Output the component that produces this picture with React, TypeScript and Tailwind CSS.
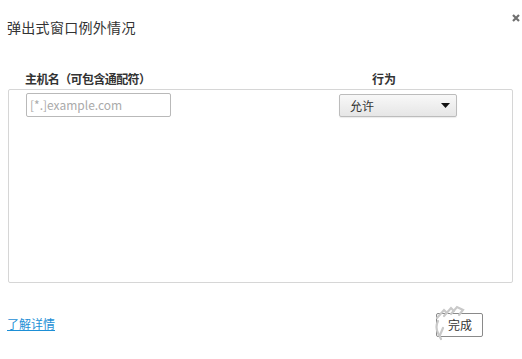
import React from "react";

export default function App() {
  return (
    <div
      className="relative w-[522px] h-[359px] bg-white overflow-hidden text-[#333]"
      style={{ fontFamily: '"Noto Sans CJK SC", "Liberation Sans", sans-serif' }}
    >
      <div className="flex justify-between items-start pl-[7px] pr-[2px] pt-[14px]">
        <div className="mt-[3px] text-[14px] leading-[20px] text-[#333] tracking-[0.3px]">弹出式窗口例外情况</div>
        <svg width="8" height="8" viewBox="0 0 8 8">
          <path d="M1 1 L7 7 M7 1 L1 7" stroke="#707070" strokeWidth="2.2" />
        </svg>
      </div>

      <div className="flex mt-[34px] text-[12px] leading-[16px] font-bold text-[#333]">
        <div className="ml-[25px] w-[347px] tracking-[-0.6px]">主机名（可包含通配符）</div>
        <div>行为</div>
      </div>

      <div className="ml-[8px] mt-[2px] w-[505px] h-[194px] border border-[#d6d6d6] rounded-[2px] flex items-start pl-[17px] pt-[3px]">
        <div className="w-[145px] h-[24px] border border-[#b9b9b9] rounded-[2px] flex items-center pl-[3px] text-[12px] text-[#aaa]">
          [*.]example.com
        </div>
        <div className="ml-[168px] mt-[1px] w-[118px] h-[23px] border border-[#bcbcbc] rounded-[2px] bg-gradient-to-b from-[#f8f8f8] to-[#e6e6e6] flex items-center justify-between pl-[10px] pr-[6px] text-[12px] text-[#333] shadow-[0_1px_1px_rgba(0,0,0,0.08)]">
          <span>允许</span>
          <svg width="9" height="5" viewBox="0 0 9 5">
            <path d="M0 0 L9 0 L4.5 5 Z" fill="#111" />
          </svg>
        </div>
      </div>

      <div className="flex justify-between items-center mt-[30px] pl-[7px] pr-[39px]">
        <a className="text-[12px] leading-[16px] text-[#1d8fd6] underline mt-[-2px]">了解详情</a>
        <div className="relative w-[47px] h-[24px] border border-[#8a8a8a] rounded-[2px] bg-white flex items-center justify-center text-[12px] text-[#333]">
          <span className="ml-[1px]">完成</span>
          <svg
            className="absolute left-[-3px] top-[-9px]"
            width="36"
            height="36"
            viewBox="0 0 36 36"
          >
            <g stroke="#c9c9c9" strokeWidth="2.2" fill="none" strokeLinecap="round">
              <path d="M3 13 L10 5 L13 8" />
              <path d="M10 11 L17 3 L20 6" />
              <path d="M17 9 L23 2 L29 5 L25 10" />
              <path d="M4 16 Q1 22 4 28 L7 34" />
              <path d="M9 23 L6 30" />
            </g>
          </svg>
        </div>
      </div>
    </div>
  );
}
